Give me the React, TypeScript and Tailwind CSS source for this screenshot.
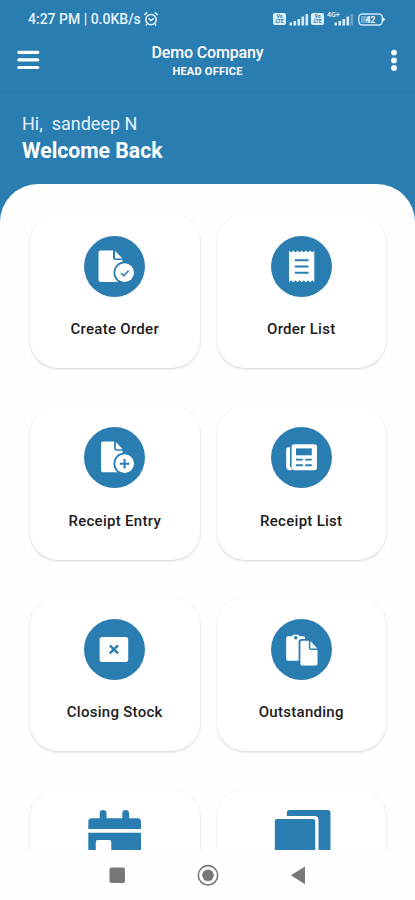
import type { ReactNode } from 'react';

interface MenuItem {
    id: string;
    label?: string;
    icon: ReactNode;
}

const BLUE = '#2a7db1';

function Disc({ children }: { children: ReactNode }) {
    return (
        <svg className="shrink-0" width="61" height="61" viewBox="0 0 61 61" fill="white">
            <circle cx="30.5" cy="30.5" r="30.5" fill={BLUE} />
            {children}
        </svg>
    );
}

function DocumentShape({ transform }: { transform?: string }) {
    return (
        <>
            <g transform={transform}>
                <path d="M16.5 14.5H29V21.5Q29 24 31.5 24H38.5V46H16.5Q14.5 46 14.5 44V16.5Q14.5 14.5 16.5 14.5Z" />
                <path d="M31 15L38.5 22.5H32Q31 22.5 31 21.5Z" />
            </g>
            <circle cx="40.6" cy="36.7" r="11.1" fill={BLUE} />
            <circle cx="40.6" cy="36.7" r="9.4" />
        </>
    );
}

const items: MenuItem[] = [
    {
        id: 'create-order',
        label: 'Create Order',
        icon: (
            <Disc>
                <DocumentShape />
                <path d="M37 37L39.8 39.8L44.6 34.8" fill="none" stroke={BLUE} strokeWidth="1.6" />
            </Disc>
        ),
    },
    {
        id: 'order-list',
        label: 'Order List',
        icon: (
            <Disc>
                <path d="M18 14.5L20.2 16.5L22.3 14.5L24.4 16.5L26.5 14.5L28.6 16.5L30.7 14.5L32.8 16.5L34.9 14.5L37 16.5L39.1 14.5L41.2 16.5L43.3 14.5V46.3L41.2 44.3L39.1 46.3L37 44.3L34.9 46.3L32.8 44.3L30.7 46.3L28.6 44.3L26.5 46.3L24.4 44.3L22.3 46.3L20.2 44.3L18 46.3Z" />
                <path d="M23.8 24.2H37.5M23.8 30.5H37.5M23.8 36.8H37.5" stroke={BLUE} strokeWidth="1.9" />
            </Disc>
        ),
    },
    {
        id: 'receipt-entry',
        label: 'Receipt Entry',
        icon: (
            <Disc>
                <DocumentShape transform="translate(4 0.2) scale(0.9 0.98)" />
                <path d="M35.8 36.7H45.4M40.6 31.9V41.5" stroke={BLUE} strokeWidth="2" />
            </Disc>
        ),
    },
    {
        id: 'receipt-list',
        label: 'Receipt List',
        icon: (
            <Disc>
                <path d="M17.5 20.2H19V39.5Q19 40.2 20.6 40.2V43.3H19Q15.2 43 15.2 39.5V22.5Q15.2 20.2 17.5 20.2Z" />
                <rect x="20.6" y="17.2" width="25.4" height="26.1" rx="2.8" />
                <rect x="25" y="21.4" width="15.8" height="6.9" fill={BLUE} />
                <path d="M25 32.6H31.8M34.2 32.6H40.8M25 38.3H31.8M34.2 38.3H40.8" stroke={BLUE} strokeWidth="1.9" />
            </Disc>
        ),
    },
    {
        id: 'closing-stock',
        label: 'Closing Stock',
        icon: (
            <Disc>
                <rect x="15.6" y="18" width="28.6" height="25" rx="2.8" />
                <path d="M25.8 26.4L34 34.3M34 26.4L25.8 34.3" stroke={BLUE} strokeWidth="2.4" />
            </Disc>
        ),
    },
    {
        id: 'outstanding',
        label: 'Outstanding',
        icon: (
            <Disc>
                <path d="M17 17.2H20.5Q21.5 15.6 24.8 15.6Q28 15.6 29 17.2H32.5Q34.2 17.2 34.2 19V20H30.5Q27.6 20 27.6 23V41.8H17Q15.2 41.8 15.2 40V19Q15.2 17.2 17 17.2Z" />
                <circle cx="24.8" cy="18.8" r="1.7" fill={BLUE} />
                <path d="M31.1 21.8H37.8V28.8Q37.8 31 40 31H46.5V44.8Q46.5 46.5 44.8 46.5H31.1Q29.4 46.5 29.4 44.8V23.5Q29.4 21.8 31.1 21.8Z" />
                <path d="M39.4 22L46.3 29.4H39.4Z" />
            </Disc>
        ),
    },
    {
        id: 'calendar',
        icon: (
            <svg className="shrink-0" width="61" height="61" viewBox="0 0 61 61" fill={BLUE}>
                <path d="M4.3 19V11.5Q4.3 8.2 7.6 8.2H15.7V3.4A3.4 3.4 0 0 1 22.5 3.4V8.2H38.3V3.4A3.4 3.4 0 0 1 45.1 3.4V8.2H53.5Q57 8.2 57 11.5V19Z" />
                <path fillRule="evenodd" d="M4.3 22.8H57V61H4.3ZM13.8 30Q11.8 30 11.8 32V61H27.3V32Q27.3 30 25.3 30Z" />
            </svg>
        ),
    },
    {
        id: 'folders',
        icon: (
            <svg className="shrink-0" width="61" height="61" viewBox="0 0 61 61" fill={BLUE}>
                <path d="M15.8 6V3Q15.8 0 18.8 0H56.5Q59.5 0 59.5 3V61H47.5V10Q47.5 6 43.5 6Z" />
                <rect x="3.8" y="8.9" width="40.4" height="58" rx="2.2" />
            </svg>
        ),
    },
];

function Signal({ dim = false }: { dim?: boolean }) {
    return (
        <svg width="20" height="13" viewBox="0 0 20 13" fill="#d5ebf8">
            <rect x="0.5" y="9.5" width="2.5" height="3" />
            <rect x="4.5" y="8" width="2.6" height="4.5" />
            <rect x="8.5" y="6" width="2.6" height="6.5" />
            <rect x="12.5" y="3.5" width="2.6" height="9" />
            <rect x="16.5" y="1" width="2.6" height="11.5" opacity={dim ? 0.35 : 1} />
        </svg>
    );
}

function Volte() {
    return (
        <div className="flex h-[12px] w-[13px] flex-col items-center justify-center rounded-[2px] bg-[#dceefa] text-[5px] leading-[5px] font-bold text-[#2a7db1]">
            <span>Vo</span>
            <span>LTE</span>
        </div>
    );
}

function StatusBar() {
    return (
        <div className="flex h-[38px] shrink-0 items-center justify-between pr-[29px] pl-7 text-[#e4f3fc]">
            <div className="flex items-center gap-[2px]">
                <span className="text-[14px] font-medium whitespace-pre">4:27 PM | 0.0KB/s</span>
                <svg width="16" height="16" viewBox="0 0 16 16" fill="none" stroke="currentColor" strokeWidth="1.5">
                    <circle cx="8" cy="8.6" r="5.2" />
                    <path d="M1.2 4L4.2 1.4M14.8 4L11.8 1.4M4 13L2.8 14.4M12 13L13.2 14.4M5.6 7.4L8 9.6L10.6 7.4" />
                </svg>
            </div>
            <div className="flex items-center">
                <Volte />
                <div className="ml-[3px]"><Signal /></div>
                <div className="ml-[2px]"><Volte /></div>
                <div className="relative ml-[10px]">
                    <Signal dim />
                    <span className="absolute -top-[2px] -left-[7px] text-[7px] leading-[8px] font-medium">4G+</span>
                </div>
                <svg className="ml-[4px]" width="28" height="13" viewBox="0 0 28 13">
                    <rect x="0.8" y="1" width="23.5" height="11" rx="3.5" fill="none" stroke="#cde7f6" strokeWidth="1.4" />
                    <rect x="3" y="3" width="9" height="7" rx="1" fill="#6fabd0" />
                    <path d="M25 4.2L27.5 6.5L25 8.8Z" fill="#cde7f6" />
                    <text x="12.6" y="9.6" textAnchor="middle" fontSize="8.5" fontWeight="700" fill="#f2faff">42</text>
                </svg>
            </div>
        </div>
    );
}

function MenuCard({ item }: { item: MenuItem }) {
    return (
        <div className="flex h-[154px] flex-col items-center rounded-[28px] bg-white pt-[21.5px] shadow-[0_1px_2.5px_rgba(0,0,0,0.17)]">
            {item.icon}
            {item.label && (
                <span className="mt-[22.5px] text-[15px] leading-[20px] font-medium tracking-[0.28px] whitespace-nowrap text-[#1c1c1c]">
                    {item.label}
                </span>
            )}
        </div>
    );
}

export default function App() {
    return (
        <div className="flex h-[900px] w-[415px] flex-col overflow-hidden bg-white font-['Roboto','Noto_Sans',sans-serif]">
            <div className="flex h-[850px] shrink-0 flex-col overflow-hidden bg-[#2a7db1]">
                <StatusBar />

                {/* App bar */}
                <div className="grid h-[54px] shrink-0 grid-cols-[30px_1fr_30px] items-start border-b border-[#2877a9] px-[17px] text-white">
                    <svg className="mt-[12px]" width="23" height="21" viewBox="0 0 23 21" stroke="white" strokeWidth="3.2" strokeLinecap="round">
                        <path d="M1.8 2.3H20.8M1.8 9.9H20.8M1.8 17.5H20.8" />
                    </svg>
                    <div className="mt-[5px] flex flex-col items-center">
                        <span className="text-[16px] leading-[20px] font-medium tracking-[-0.15px]">Demo Company</span>
                        <span className="mt-[2px] text-[11px] leading-[13px] font-bold tracking-[0.25px]">HEAD OFFICE</span>
                    </div>
                    <svg className="mt-[11px] ml-[15px]" width="15" height="23" viewBox="0 0 15 23" fill="white">
                        <circle cx="11" cy="3.6" r="2.9" />
                        <circle cx="11" cy="11.4" r="2.9" />
                        <circle cx="11" cy="19" r="2.9" />
                    </svg>
                </div>

                {/* Greeting */}
                <div className="flex h-[92px] shrink-0 flex-col pt-[20px] pl-[22px] text-white">
                    <span className="text-[18px] leading-[24px] whitespace-pre text-[#e4f2fb]">Hi,  sandeep N</span>
                    <span className="mt-[2px] text-[21.2px] leading-[26px] font-bold">Welcome Back</span>
                </div>

                {/* Menu grid */}
                <div className="grid shrink-0 grid-cols-2 gap-x-[17px] gap-y-[37.5px] rounded-t-[38px] bg-[#fefefe] pt-[30px] pr-[29px] pl-[30px]">
                    {items.map((item) => (
                        <MenuCard key={item.id} item={item} />
                    ))}
                </div>
            </div>

            {/* System navigation */}
            <div className="flex h-[50px] shrink-0 items-center justify-center bg-[#fefefe]">
                <svg width="198" height="24" viewBox="0 0 198 24" fill="#777777">
                    <rect x="0.5" y="4.5" width="15.5" height="15.5" rx="2" />
                    <circle cx="99" cy="12.3" r="9.7" fill="none" stroke="#777777" strokeWidth="1.6" />
                    <circle cx="99" cy="12.3" r="5.8" />
                    <path d="M182 12.3L196 3.5V21.3Z" />
                </svg>
            </div>
        </div>
    );
}
